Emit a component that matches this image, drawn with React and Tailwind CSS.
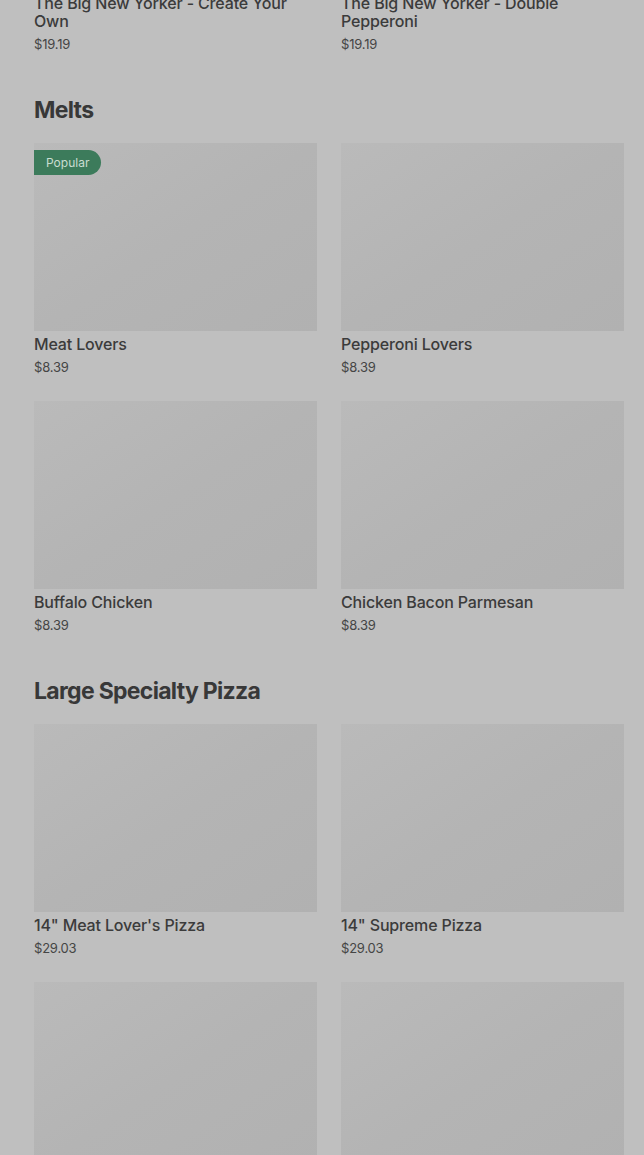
import React from 'react';

const sections = [
  {
    title: null,
    items: [
      { name: 'The Big New Yorker - Create Your Own', price: '$19.19' },
      { name: 'The Big New Yorker - Double Pepperoni', price: '$19.19' },
    ],
  },
  {
    title: 'Melts',
    items: [
      { name: 'Meat Lovers', price: '$8.39', popular: true },
      { name: 'Pepperoni Lovers', price: '$8.39' },
      { name: 'Buffalo Chicken', price: '$8.39' },
      { name: 'Chicken Bacon Parmesan', price: '$8.39' },
    ],
  },
  {
    title: 'Large Specialty Pizza',
    items: [
      { name: '14" Meat Lover\'s Pizza', price: '$29.03' },
      { name: '14" Supreme Pizza', price: '$29.03' },
      { name: '14" Pepperoni Lover\'s Pizza', price: '$29.03' },
      { name: '14" Veggie Lover\'s Pizza', price: '$29.03' },
    ],
  },
];

const ItemCard = ({ item }) => (
  <div className="flex flex-col">
    <div className="relative h-[188px] bg-linear-to-br from-[#bababa] via-[#b4b4b4] to-[#b1b1b1]">
      {item.popular && (
        <span className="absolute left-0 top-[7px] h-[25px] pl-3 pr-3 flex items-center rounded-r-full bg-[#3c7b5b] text-[12px] text-[#c9ddd1]">
          Popular
        </span>
      )}
    </div>
    <div className="mt-[4px] text-[16px] leading-[18px] font-medium tracking-[-0.15px] text-[#3b3b3b]">{item.name}</div>
    <div className="mt-[4px] text-[13px] leading-[20px] text-[#454545] tracking-[-0.2px]">{item.price}</div>
  </div>
);

export default function App() {
  return (
    <div className="min-h-screen bg-[#bfbfbf] overflow-hidden pl-[34px] pr-[20px]" style={{ fontFamily: 'Inter, "Liberation Sans", sans-serif' }}>
      {sections.map((section, i) => (
        <section key={i} className={i === 0 ? '-mt-[198px]' : 'mt-[40px]'}>
          {section.title && (
            <h2 className="text-[23px] leading-[32px] font-bold tracking-[-0.7px] text-[#383838] mb-[17px]">{section.title}</h2>
          )}
          <div className="grid grid-cols-2 gap-x-6 gap-y-6">
            {section.items.map((item) => (
              <ItemCard key={item.name} item={item} />
            ))}
          </div>
        </section>
      ))}
    </div>
  );
}
